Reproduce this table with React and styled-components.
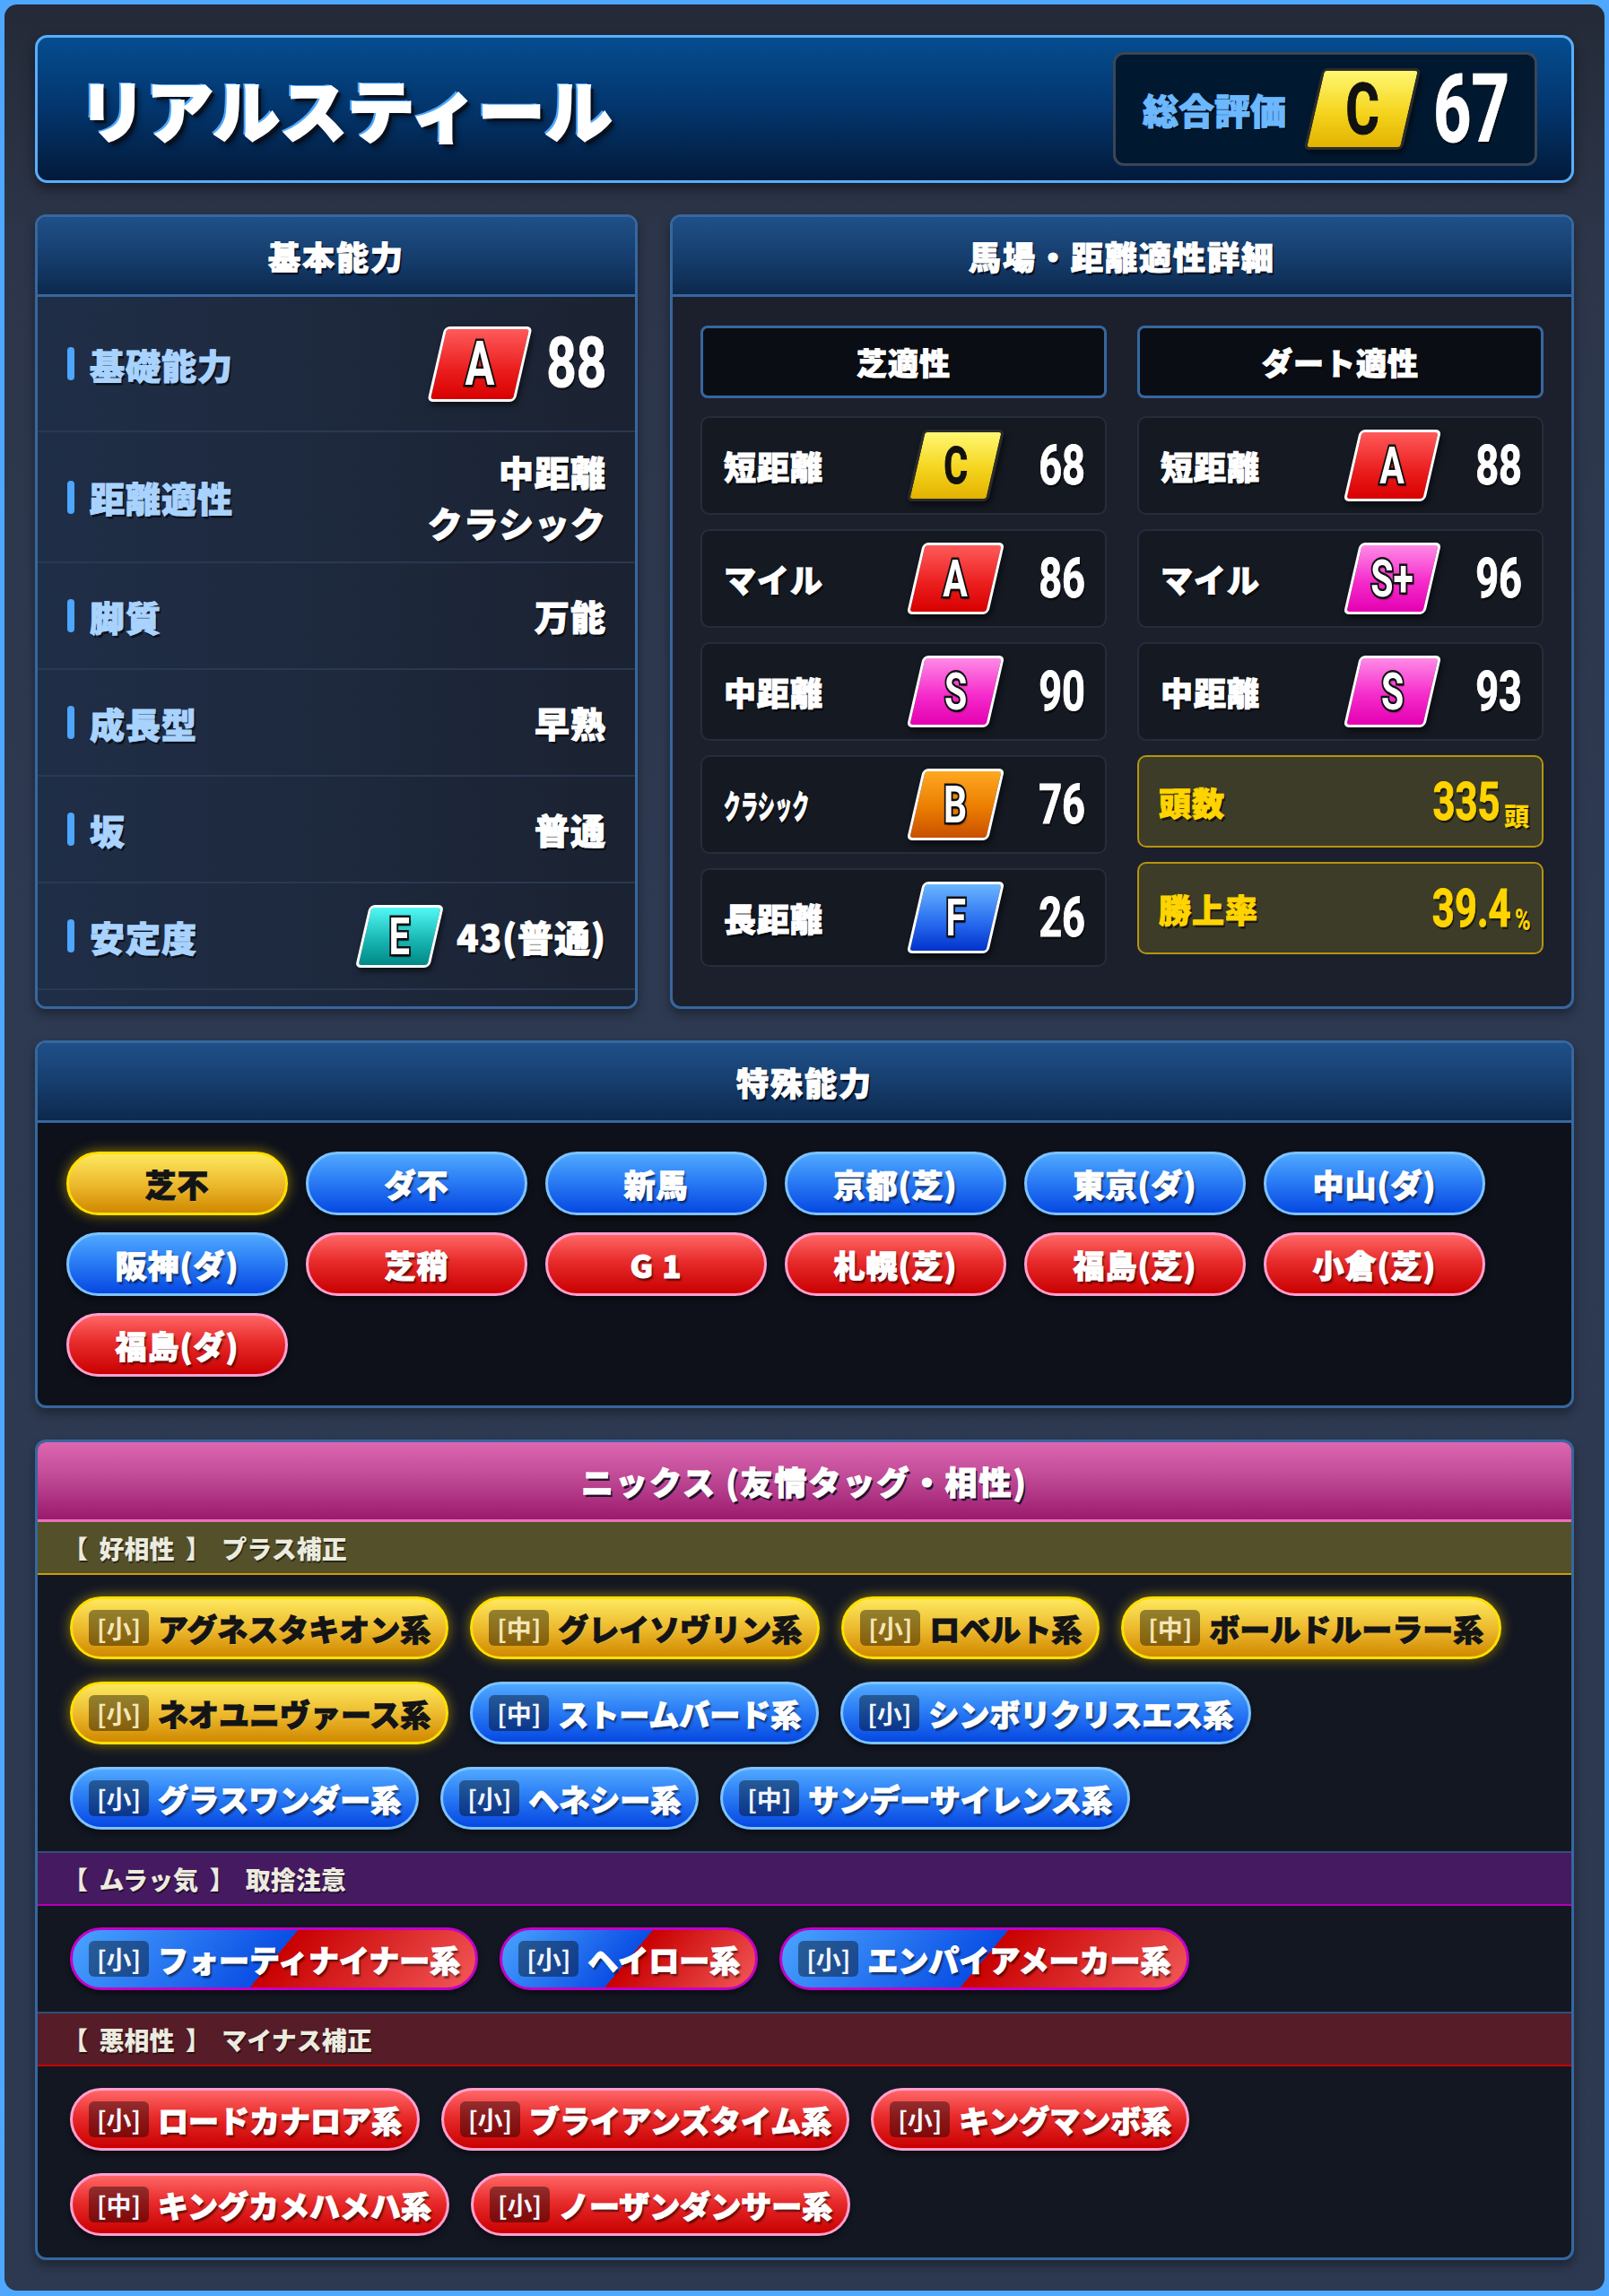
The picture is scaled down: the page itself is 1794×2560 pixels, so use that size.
import styled, { createGlobalStyle, css } from "styled-components";

const GlobalStyle = createGlobalStyle`
  * { box-sizing: border-box; }
  html, body { margin: 0; padding: 0; }
  body {
    background: #4ea8ff;
    font-family: "Noto Sans CJK JP", "Noto Sans", sans-serif;
    color: #fff;
  }
`;

const LATIN = `Roboto, "Liberation Sans", sans-serif`;

// thickens the CJK bold face a little, the game font is heavier
const heavy = (w = 1) => css`
  -webkit-text-stroke: ${w}px currentColor;
`;

const grades = {
  A: { fill: "linear-gradient(180deg, #ff5a5a 0%, #ea1c1c 60%, #d80000 100%)", edge: "#fff", ink: "#fff" },
  S: { fill: "linear-gradient(180deg, #ff8ae6 0%, #f52ccb 55%, #e400b2 100%)", edge: "#fff", ink: "#fff" },
  B: { fill: "linear-gradient(180deg, #ffa822 0%, #ea7d00 55%, #c95000 100%)", edge: "#fff", ink: "#fff" },
  C: { fill: "linear-gradient(180deg, #fff872 0%, #f5d41e 55%, #e2b200 100%)", edge: "#2c2c2c", ink: "#111" },
  E: { fill: "linear-gradient(180deg, #52f8f4 0%, #19b8b4 55%, #008886 100%)", edge: "#fff", ink: "#fff" },
  F: { fill: "linear-gradient(180deg, #6ab6ff 0%, #2b6ff0 55%, #0032cc 100%)", edge: "#fff", ink: "#fff" },
};

const basics = [
  { label: "基礎能力", grade: "A", num: "88", min: 151 },
  { label: "距離適性", lines: ["中距離", "クラシック"], min: 146, tight: true },
  { label: "脚質", lines: ["万能"] },
  { label: "成長型", lines: ["早熟"] },
  { label: "坂", lines: ["普通"] },
  { label: "安定度", grade: "E", text: "43(普通)" },
];

const turf = [
  { label: "短距離", grade: "C", num: "68" },
  { label: "マイル", grade: "A", num: "86" },
  { label: "中距離", grade: "S", num: "90" },
  { label: "クラシック", grade: "B", num: "76", squeeze: true },
  { label: "長距離", grade: "F", num: "26" },
];

const dirt = [
  { label: "短距離", grade: "A", num: "88" },
  { label: "マイル", grade: "S+", num: "96" },
  { label: "中距離", grade: "S", num: "93" },
];

const specials = [
  ["芝不", "gold"], ["ダ不", "blue"], ["新馬", "blue"], ["京都(芝)", "blue"], ["東京(ダ)", "blue"], ["中山(ダ)", "blue"],
  ["阪神(ダ)", "blue"], ["芝稍", "red"], ["G 1", "red"], ["札幌(芝)", "red"], ["福島(芝)", "red"], ["小倉(芝)", "red"],
  ["福島(ダ)", "red"],
];

const nicks = [
  {
    kind: "good",
    title: "【 好相性 】 プラス補正",
    items: [
      ["小", "アグネスタキオン系", "gold"], ["中", "グレイソヴリン系", "gold"], ["小", "ロベルト系", "gold"],
      ["中", "ボールドルーラー系", "gold"], ["小", "ネオユニヴァース系", "gold"], ["中", "ストームバード系", "blue"],
      ["小", "シンボリクリスエス系", "blue"], ["小", "グラスワンダー系", "blue"], ["小", "ヘネシー系", "blue"],
      ["中", "サンデーサイレンス系", "blue"],
    ],
  },
  {
    kind: "mixed",
    title: "【 ムラッ気 】 取捨注意",
    items: [["小", "フォーティナイナー系", "mixed"], ["小", "ヘイロー系", "mixed"], ["小", "エンパイアメーカー系", "mixed"]],
  },
  {
    kind: "bad",
    title: "【 悪相性 】 マイナス補正",
    items: [
      ["小", "ロードカナロア系", "red"], ["小", "ブライアンズタイム系", "red"], ["小", "キングマンボ系", "red"],
      ["中", "キングカメハメハ系", "red"], ["小", "ノーザンダンサー系", "red"],
    ],
  },
];

const Grade = ({ g, w, h, size }) => {
  const tone = grades[g[0]];
  return (
    <GradeShape $w={w} $h={h} $fill={tone.fill} $edge={tone.edge}>
      <GradeLetter $size={size} $ink={tone.ink}>{g}</GradeLetter>
    </GradeShape>
  );
};

const Num = ({ children, w, size, color, align = "right", sx = 0.74 }) => (
  <NumBox $w={w} $align={align}>
    <NumText $size={size} $color={color} $align={align} $sx={sx}>{children}</NumText>
  </NumBox>
);

const App = () => {
  return (
    <>
      <GlobalStyle />
      <Page>
        <TitleBar>
          <Title>リアルスティール</Title>
          <Rating>
            <RatingLabel>総合評価</RatingLabel>
            <Grade g="C" w={110} h={91} size={80} />
            <Num w={84} size={106} align="left" sx={0.7}>67</Num>
          </Rating>
        </TitleBar>

        <Split>
          <Panel $bg="#1c2232">
            <PanelHead>基本能力</PanelHead>
            <StatList>
              {basics.map((row) => (
                <StatRow key={row.label} $min={row.min} $tight={row.tight}>
                  <StatLabel>{row.label}</StatLabel>
                  <StatValue>
                    {row.grade && (
                      <Grade
                        g={row.grade}
                        w={row.grade === "E" ? 83 : 98}
                        h={row.grade === "E" ? 70 : 84}
                        size={row.grade === "E" ? 58 : 68}
                      />
                    )}
                    {row.num && <Num w={68} size={77} sx={0.76}>{row.num}</Num>}
                    {row.text && <ValueText>{row.text}</ValueText>}
                    {row.lines && (
                      <ValueLines>
                        {row.lines.map((l) => <ValueLine key={l}>{l}</ValueLine>)}
                      </ValueLines>
                    )}
                  </StatValue>
                </StatRow>
              ))}
            </StatList>
          </Panel>

          <Panel $bg="#1c202d">
            <PanelHead>馬場・距離適性詳細</PanelHead>
            <Aptitude>
              <AptColumn>
                <SubHead>芝適性</SubHead>
                {turf.map((c) => (
                  <Cell key={c.label}>
                    <CellLabel $squeeze={c.squeeze}>{c.label}</CellLabel>
                    <Grade g={c.grade} w={91} h={80} size={57} />
                    <CellNum><Num w={64} size={61}>{c.num}</Num></CellNum>
                  </Cell>
                ))}
              </AptColumn>
              <AptColumn>
                <SubHead>ダート適性</SubHead>
                {dirt.map((c) => (
                  <Cell key={c.label}>
                    <CellLabel>{c.label}</CellLabel>
                    <Grade g={c.grade} w={91} h={80} size={57} />
                    <CellNum><Num w={64} size={61}>{c.num}</Num></CellNum>
                  </Cell>
                ))}
                <Tally>
                  <TallyLabel>頭数</TallyLabel>
                  <TallyValue>
                    <Num w={74} size={59} color="#ffd400">335</Num>
                    <Unit>頭</Unit>
                  </TallyValue>
                </Tally>
                <Tally>
                  <TallyLabel>勝上率</TallyLabel>
                  <TallyValue>
                    <Num w={84} size={59} color="#ffd400">39.4</Num>
                    <Unit $latin>%</Unit>
                  </TallyValue>
                </Tally>
              </AptColumn>
            </Aptitude>
          </Panel>
        </Split>

        <Panel $bg="#0e111a">
          <PanelHead>特殊能力</PanelHead>
          <PillWrap>
            {specials.map(([name, t]) => (
              <Pill key={name} $tone={t}>{name}</Pill>
            ))}
          </PillWrap>
        </Panel>

        <Panel $bg="#131722">
          <PanelHead $pink>ニックス (友情タッグ・相性)</PanelHead>
          {nicks.map((sec) => (
            <Section key={sec.kind}>
              <SectionHead $kind={sec.kind}>{sec.title}</SectionHead>
              <NickWrap>
                {sec.items.map(([size, name, t]) => (
                  <NickPill key={name} $tone={t}>
                    <SizeTag $gold={t === "gold"}>[{size}]</SizeTag>
                    {name}
                  </NickPill>
                ))}
              </NickWrap>
            </Section>
          ))}
        </Panel>
      </Page>
    </>
  );
};

export default App;

const Page = styled.main`
  margin: 5px;
  padding: 34px;
  border-radius: 14px;
  background: linear-gradient(180deg, #242a37 0%, #2c3549 10%, #2e3a52 40%, #2d3950 100%);
  display: flex;
  flex-direction: column;
  gap: 35px;
`;

const TitleBar = styled.header`
  height: 165px;
  display: flex;
  align-items: center;
  justify-content: space-between;
  padding: 0 38px 0 46px;
  border: 3px solid #5aaefc;
  border-radius: 14px;
  background: linear-gradient(180deg, #054d90 0%, #03356c 50%, #021a3a 100%);
  box-shadow: 0 6px 14px rgba(0, 0, 0, 0.45);
`;

const Title = styled.h1`
  margin: 0;
  font-size: 75px;
  font-weight: 900;
  line-height: 1.1;
  ${heavy(2)}
  text-shadow: -3px -2px 0 #4aa8ff, 4px 4px 0 #08111f, 5px 6px 6px rgba(0, 0, 0, 0.5);
`;

const Rating = styled.div`
  width: 473px;
  height: 127px;
  display: flex;
  align-items: center;
  gap: 14px;
  padding-left: 30px;
  background: #011930;
  border: 3px solid #3b4656;
  border-radius: 12px;
`;

const RatingLabel = styled.span`
  font-size: 40px;
  font-weight: 900;
  color: #6cb8ff;
  ${heavy(1)}
  text-shadow: 2px 2px 0 rgba(0, 0, 0, 0.6);
  margin-right: 6px;
`;

const GradeShape = styled.div`
  position: relative;
  flex: none;
  width: ${(p) => p.$w}px;
  height: ${(p) => p.$h}px;
  margin: 0 ${(p) => Math.round(p.$h * 0.115)}px;
  display: flex;
  align-items: center;
  justify-content: center;
  &::before {
    content: "";
    position: absolute;
    inset: 0;
    transform: skewX(-13deg);
    border-radius: 6px;
    border: 3px solid ${(p) => p.$edge};
    background: ${(p) => p.$fill};
    box-shadow: 3px 4px 6px rgba(0, 0, 0, 0.55);
  }
`;

const GradeLetter = styled.span`
  position: relative;
  font-family: ${LATIN};
  font-weight: 700;
  font-size: ${(p) => p.$size}px;
  line-height: 1;
  color: ${(p) => p.$ink};
  transform: scaleX(0.72);
  ${(p) =>
    p.$ink === "#fff"
      ? css`
          -webkit-text-stroke: 5px #111;
          paint-order: stroke fill;
          text-shadow: 2px 3px 2px rgba(0, 0, 0, 0.5);
        `
      : heavy(1)}
`;

const NumBox = styled.span`
  flex: none;
  display: inline-flex;
  justify-content: ${(p) => (p.$align === "left" ? "flex-start" : "flex-end")};
  width: ${(p) => p.$w}px;
`;

const NumText = styled.span`
  display: inline-block;
  white-space: nowrap;
  font-family: ${LATIN};
  font-weight: 700;
  font-size: ${(p) => p.$size}px;
  line-height: 1;
  color: ${(p) => p.$color || "#fff"};
  ${heavy(1)}
  transform: scaleX(${(p) => p.$sx});
  transform-origin: ${(p) => (p.$align === "left" ? "left" : "right")} center;
  text-shadow: 2px 3px 0 rgba(0, 0, 0, 0.55);
`;

const Split = styled.div`
  display: grid;
  grid-template-columns: 2fr 3fr;
  gap: 36px;
`;

const Panel = styled.section`
  display: flex;
  flex-direction: column;
  border: 3px solid #36679f;
  border-radius: 12px;
  overflow: hidden;
  background: ${(p) => p.$bg};
  box-shadow: 0 6px 12px rgba(0, 0, 0, 0.35);
`;

const PanelHead = styled.h2`
  margin: 0;
  flex: none;
  height: 89px;
  display: flex;
  align-items: center;
  justify-content: center;
  font-size: 36px;
  font-weight: 900;
  letter-spacing: 2px;
  ${heavy(1)}
  text-shadow: 2px 3px 0 rgba(5, 12, 28, 0.85);
  background: ${(p) =>
    p.$pink
      ? "linear-gradient(180deg, #dc66b0 0%, #c04a96 45%, #9b1a6c 100%)"
      : "linear-gradient(180deg, #1f5089 0%, #163e6e 50%, #0c294e 100%)"};
  border-bottom: 3px solid ${(p) => (p.$pink ? "#e872bb" : "#36679f")};
`;

const StatList = styled.div`
  flex: 1;
  background: linear-gradient(90deg, #1f2e47 0%, #1d283c 55%, #1b2231 100%);
`;

const StatRow = styled.div`
  min-height: ${(p) => p.$min || 119}px;
  display: flex;
  align-items: center;
  justify-content: space-between;
  padding: ${(p) => (p.$tight ? "12px" : "22px")} 32px ${(p) => (p.$tight ? "12px" : "22px")} 33px;
  border-bottom: 2px solid #2a3850;
`;

const StatLabel = styled.div`
  display: flex;
  align-items: center;
  gap: 17px;
  font-size: 39px;
  font-weight: 900;
  letter-spacing: 1px;
  color: #a9d3ff;
  ${heavy(1)}
  text-shadow: 2px 3px 0 rgba(0, 0, 0, 0.6);
  &::before {
    content: "";
    width: 8px;
    height: 37px;
    border-radius: 4px;
    background: #4da6ff;
  }
`;

const StatValue = styled.div`
  display: flex;
  align-items: center;
  gap: 14px;
`;

const ValueText = styled.span`
  font-size: 40px;
  font-weight: 900;
  letter-spacing: 1px;
  ${heavy(1)}
  text-shadow: 2px 3px 0 rgba(0, 0, 0, 0.6);
`;

const ValueLines = styled.div`
  display: flex;
  flex-direction: column;
  align-items: flex-end;
`;

const ValueLine = styled.span`
  font-size: 39px;
  font-weight: 900;
  line-height: 1.45;
  letter-spacing: 1px;
  ${heavy(1)}
  text-shadow: 2px 3px 0 rgba(0, 0, 0, 0.6);
`;

const Aptitude = styled.div`
  display: grid;
  grid-template-columns: 1fr 1fr;
  gap: 34px;
  padding: 32px 31px 44px;
`;

const AptColumn = styled.div`
  display: flex;
  flex-direction: column;
  gap: 16px;
`;

const SubHead = styled.div`
  height: 81px;
  margin-bottom: 4px;
  display: flex;
  align-items: center;
  justify-content: center;
  font-size: 34px;
  font-weight: 900;
  letter-spacing: 1px;
  ${heavy(1)}
  background: #0a0d14;
  border: 3px solid #36679f;
  border-radius: 8px;
  text-shadow: 2px 3px 0 rgba(0, 0, 0, 0.6);
`;

const Cell = styled.div`
  height: 110px;
  display: flex;
  align-items: center;
  padding: 0 22px 0 24px;
  background: #141922;
  border: 2px solid #262d3a;
  border-radius: 10px;
`;

const CellLabel = styled.span`
  flex: 1;
  font-size: 36px;
  font-weight: 900;
  letter-spacing: 1px;
  white-space: nowrap;
  ${heavy(1)}
  text-shadow: 2px 3px 0 rgba(0, 0, 0, 0.6);
  ${(p) =>
    p.$squeeze &&
    css`
      transform: scaleX(0.52);
      transform-origin: left center;
    `}
`;

const CellNum = styled.div`
  margin-left: 26px;
`;

const Tally = styled.div`
  height: 103px;
  display: flex;
  align-items: center;
  justify-content: space-between;
  padding: 0 10px 0 22px;
  background: #3d3c29;
  border: 2px solid #b8940c;
  border-radius: 10px;
`;

const TallyLabel = styled.span`
  font-size: 36px;
  font-weight: 900;
  color: #ffd400;
  letter-spacing: 1px;
  ${heavy(1)}
  text-shadow: 2px 3px 0 rgba(0, 0, 0, 0.6);
`;

const TallyValue = styled.div`
  display: flex;
  align-items: flex-end;
`;

const Unit = styled.span`
  margin-left: 4px;
  width: ${(p) => (p.$latin ? 20 : 32)}px;
  font-family: ${(p) => (p.$latin ? LATIN : "inherit")};
  font-size: ${(p) => (p.$latin ? 34 : 28)}px;
  font-weight: 900;
  line-height: 1;
  color: #ffd400;
  text-shadow: 2px 2px 0 rgba(0, 0, 0, 0.6);
  ${(p) => p.$latin && css`transform: scaleX(0.7); transform-origin: left bottom;`}
`;

const tones = {
  gold: css`
    background: linear-gradient(180deg, #fde85e 0%, #ebb62a 55%, #d08900 100%);
    border-color: #ffe000;
    color: #141414;
    text-shadow: 1px 1px 0 rgba(255, 255, 255, 0.3);
    box-shadow: 0 0 14px rgba(255, 214, 0, 0.55), 0 4px 6px rgba(0, 0, 0, 0.4);
  `,
  blue: css`
    background: linear-gradient(180deg, #50a8ff 0%, #2b7df5 45%, #0648e2 100%);
    border-color: #7dc3ff;
    color: #fff;
    text-shadow: 2px 3px 2px rgba(0, 0, 0, 0.55);
    box-shadow: 0 4px 6px rgba(0, 0, 0, 0.45);
  `,
  red: css`
    background: linear-gradient(180deg, #ff6666 0%, #e82b2b 45%, #c90000 100%);
    border-color: #ff9fd0;
    color: #fff;
    text-shadow: 2px 3px 2px rgba(0, 0, 0, 0.55);
    box-shadow: 0 4px 6px rgba(0, 0, 0, 0.45);
  `,
  mixed: css`
    background: linear-gradient(130deg, #4aa4ff 0%, #0a4ee4 50%, #c80000 50%, #f25858 100%);
    border-color: #c400c8;
    color: #fff;
    text-shadow: 2px 3px 2px rgba(0, 0, 0, 0.55);
    box-shadow: 0 4px 6px rgba(0, 0, 0, 0.45);
  `,
};

const PillWrap = styled.div`
  display: flex;
  flex-wrap: wrap;
  gap: 19px 20px;
  padding: 32px;
`;

const Pill = styled.div`
  width: 247px;
  height: 71px;
  display: flex;
  align-items: center;
  justify-content: center;
  border: 3px solid;
  border-radius: 36px;
  font-size: 35px;
  font-weight: 900;
  letter-spacing: 1px;
  ${heavy(1)}
  ${(p) => tones[p.$tone]}
`;

const Section = styled.div`
  & + & {
    border-top: 2px solid #2e5078;
  }
`;

const sectionTones = {
  good: css`background: #54502a; border-bottom-color: #c9a000;`,
  mixed: css`background: #461a60; border-bottom-color: #b400b4;`,
  bad: css`background: #561c28; border-bottom-color: #c80000;`,
};

const SectionHead = styled.div`
  height: 59px;
  display: flex;
  align-items: center;
  padding: 0 34px 0 28px;
  border-bottom: 2px solid;
  font-size: 28px;
  font-weight: 900;
  word-spacing: 6px;
  color: #ecebdf;
  text-shadow: 1px 2px 0 rgba(0, 0, 0, 0.5);
  ${(p) => sectionTones[p.$kind]}
`;

const NickWrap = styled.div`
  display: flex;
  flex-wrap: wrap;
  gap: 25px 24px;
  padding: 24px 34px 24px 36px;
`;

const NickPill = styled.div`
  height: 70px;
  display: flex;
  align-items: center;
  gap: 10px;
  padding: 0 17px 0 18px;
  border: 3px solid;
  border-radius: 35px;
  font-size: 34px;
  font-weight: 900;
  white-space: nowrap;
  ${heavy(1)}
  ${(p) => tones[p.$tone]}
`;

const SizeTag = styled.span`
  min-width: 67px;
  height: 40px;
  display: flex;
  align-items: center;
  justify-content: center;
  padding: 0 6px;
  border-radius: 6px;
  background: rgba(0, 0, 0, 0.4);
  font-size: 28px;
  font-weight: 700;
  -webkit-text-stroke: 0;
  color: ${(p) => (p.$gold ? "#f5e6b6" : "#f2f5ff")};
  text-shadow: none;
`;
